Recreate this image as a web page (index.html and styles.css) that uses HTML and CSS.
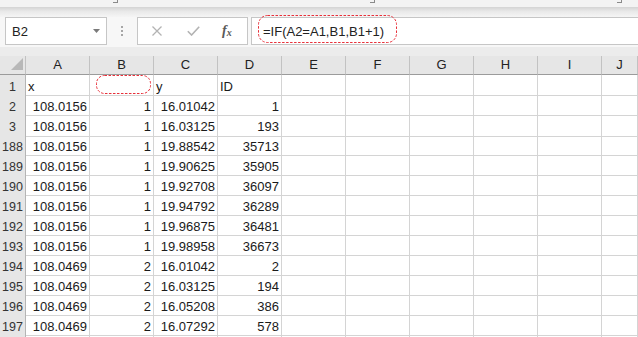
FILE: index.html
```html
<!DOCTYPE html>
<html lang="en">
<head>
  <meta charset="UTF-8">
  <title>Sheet1 - Excel</title>
  <link rel="stylesheet" href="styles.css">
</head>
<body>
  <div class="ribbon-edge">
    <span class="launcher l1"></span>
    <span class="launcher l2"></span>
    <span class="launcher l3"></span>
  </div>
  <div class="shade"></div>

  <div class="formula-bar">
    <div class="name-box">
      <span>B2</span>
      <svg class="drop" width="7" height="4" viewBox="0 0 7 4"><path d="M0 0H7L3.5 4Z" fill="#7a7a7a"/></svg>
    </div>
    <div class="grip"><i></i><i></i><i></i></div>
    <div class="fx-box">
      <svg class="icon-x" width="10" height="10" viewBox="0 0 10 10"><path d="M0.5 0.5L9.5 9.5M9.5 0.5L0.5 9.5" stroke="#b3b3b3" stroke-width="1.3" fill="none"/></svg>
      <svg class="icon-ok" width="13" height="10" viewBox="0 0 13 10"><path d="M0.8 5.2L4.6 9L12.2 0.8" stroke="#b3b3b3" stroke-width="1.6" fill="none"/></svg>
      <span class="fx">f<sub>x</sub></span>
    </div>
    <div class="formula-input">
      <span class="formula">=IF(A2=A1,B1,B1+1)</span>
      <svg class="mark formula-mark" width="139" height="28"><rect x="0.5" y="0.5" width="138" height="27" rx="9"/></svg>
    </div>
  </div>
  <div class="gap"></div>

  <div class="grid">
    <div class="row head">
      <div class="corner"><span class="corner-tri"></span></div>
      <div class="ch">A</div><div class="ch">B</div><div class="ch">C</div><div class="ch">D</div><div class="ch">E</div>
      <div class="ch">F</div><div class="ch">G</div><div class="ch">H</div><div class="ch">I</div><div class="ch">J</div>
    </div>
    <div class="row">
      <div class="rh">1</div>
      <div class="cell">x</div>
      <div class="cell marked"><svg class="mark cell-mark" width="55" height="19"><rect x="0.5" y="0.5" width="54" height="18" rx="8"/></svg></div>
      <div class="cell">y</div>
      <div class="cell">ID</div>
      <div class="cell"></div><div class="cell"></div><div class="cell"></div><div class="cell"></div><div class="cell"></div><div class="cell"></div>
    </div>
    <div class="row">
      <div class="rh">2</div>
      <div class="cell num">108.0156</div><div class="cell num">1</div><div class="cell num">16.01042</div><div class="cell num">1</div>
      <div class="cell"></div><div class="cell"></div><div class="cell"></div><div class="cell"></div><div class="cell"></div><div class="cell"></div>
    </div>
    <div class="row hidden-above">
      <div class="rh">3</div>
      <div class="cell num">108.0156</div><div class="cell num">1</div><div class="cell num">16.03125</div><div class="cell num">193</div>
      <div class="cell"></div><div class="cell"></div><div class="cell"></div><div class="cell"></div><div class="cell"></div><div class="cell"></div>
    </div>
    <div class="row">
      <div class="rh">188</div>
      <div class="cell num">108.0156</div><div class="cell num">1</div><div class="cell num">19.88542</div><div class="cell num">35713</div>
      <div class="cell"></div><div class="cell"></div><div class="cell"></div><div class="cell"></div><div class="cell"></div><div class="cell"></div>
    </div>
    <div class="row">
      <div class="rh">189</div>
      <div class="cell num">108.0156</div><div class="cell num">1</div><div class="cell num">19.90625</div><div class="cell num">35905</div>
      <div class="cell"></div><div class="cell"></div><div class="cell"></div><div class="cell"></div><div class="cell"></div><div class="cell"></div>
    </div>
    <div class="row">
      <div class="rh">190</div>
      <div class="cell num">108.0156</div><div class="cell num">1</div><div class="cell num">19.92708</div><div class="cell num">36097</div>
      <div class="cell"></div><div class="cell"></div><div class="cell"></div><div class="cell"></div><div class="cell"></div><div class="cell"></div>
    </div>
    <div class="row">
      <div class="rh">191</div>
      <div class="cell num">108.0156</div><div class="cell num">1</div><div class="cell num">19.94792</div><div class="cell num">36289</div>
      <div class="cell"></div><div class="cell"></div><div class="cell"></div><div class="cell"></div><div class="cell"></div><div class="cell"></div>
    </div>
    <div class="row">
      <div class="rh">192</div>
      <div class="cell num">108.0156</div><div class="cell num">1</div><div class="cell num">19.96875</div><div class="cell num">36481</div>
      <div class="cell"></div><div class="cell"></div><div class="cell"></div><div class="cell"></div><div class="cell"></div><div class="cell"></div>
    </div>
    <div class="row">
      <div class="rh">193</div>
      <div class="cell num">108.0156</div><div class="cell num">1</div><div class="cell num">19.98958</div><div class="cell num">36673</div>
      <div class="cell"></div><div class="cell"></div><div class="cell"></div><div class="cell"></div><div class="cell"></div><div class="cell"></div>
    </div>
    <div class="row">
      <div class="rh">194</div>
      <div class="cell num">108.0469</div><div class="cell num">2</div><div class="cell num">16.01042</div><div class="cell num">2</div>
      <div class="cell"></div><div class="cell"></div><div class="cell"></div><div class="cell"></div><div class="cell"></div><div class="cell"></div>
    </div>
    <div class="row">
      <div class="rh">195</div>
      <div class="cell num">108.0469</div><div class="cell num">2</div><div class="cell num">16.03125</div><div class="cell num">194</div>
      <div class="cell"></div><div class="cell"></div><div class="cell"></div><div class="cell"></div><div class="cell"></div><div class="cell"></div>
    </div>
    <div class="row">
      <div class="rh">196</div>
      <div class="cell num">108.0469</div><div class="cell num">2</div><div class="cell num">16.05208</div><div class="cell num">386</div>
      <div class="cell"></div><div class="cell"></div><div class="cell"></div><div class="cell"></div><div class="cell"></div><div class="cell"></div>
    </div>
    <div class="row">
      <div class="rh">197</div>
      <div class="cell num">108.0469</div><div class="cell num">2</div><div class="cell num">16.07292</div><div class="cell num">578</div>
      <div class="cell"></div><div class="cell"></div><div class="cell"></div><div class="cell"></div><div class="cell"></div><div class="cell"></div>
    </div>
    <div class="row stub">
      <div class="rh"></div>
      <div class="cell"></div><div class="cell"></div><div class="cell"></div><div class="cell"></div>
      <div class="cell"></div><div class="cell"></div><div class="cell"></div><div class="cell"></div><div class="cell"></div><div class="cell"></div>
    </div>
  </div>
</body>
</html>
```

FILE: styles.css
```css
* {
  margin: 0;
  padding: 0;
  box-sizing: border-box;
}

body {
  font-family: 'Liberation Sans', Arial, sans-serif;
  background-color: #fff;
  color: #1a1a1a;
  width: 638px;
  height: 337px;
  overflow: hidden;
}

/* bottom edge of the ribbon, cut off by the screenshot */
.ribbon-edge {
  height: 7px;
  background-color: #f3f3f3;
  display: flex;
  overflow: hidden;
}

.launcher {
  width: 5px;
  height: 3px;
  border-right: 1px solid #8a8a8a;
  border-bottom: 1px solid #8a8a8a;
}

.l1 { margin-left: 113px; }
.l2 { margin-left: 252px; }
.l3 { margin-left: 242px; }

.shade {
  height: 10px;
  background: linear-gradient(#d4d4d4, #e9e9e9 45%, #f5f5f5);
}

/* formula bar */
.formula-bar {
  height: 30px;
  background-color: #f7f7f7;
  display: flex;
  align-items: flex-start;
  padding-left: 5px;
}

.name-box {
  width: 102px;
  height: 28px;
  border: 1px solid #c6c6c6;
  background-color: #fff;
  display: flex;
  align-items: center;
  justify-content: space-between;
  padding: 0 6px 0 6px;
  font-size: 13px;
  color: #222;
}

.grip {
  width: 30px;
  display: flex;
  flex-direction: column;
  align-items: center;
  gap: 2px;
  padding-top: 9px;
}

.grip i {
  width: 2px;
  height: 2px;
  background-color: #a6a6a6;
}

.fx-box {
  width: 111px;
  height: 28px;
  border: 1px solid #c6c6c6;
  background-color: #fff;
  display: flex;
  align-items: center;
  padding-left: 14px;
}

.icon-ok { margin-left: 25px; }

.fx {
  margin-left: 22px;
  font-family: 'Liberation Serif', serif;
  font-style: italic;
  font-weight: bold;
  font-size: 14px;
  color: #595959;
}

.fx sub {
  font-size: 10px;
  vertical-align: -1px;
}

.formula-input {
  position: relative;
  flex: 1;
  height: 28px;
  margin-left: 3px;
  border: 1px solid #c6c6c6;
  border-right: none;
  background-color: #fff;
  display: flex;
  align-items: center;
  padding-left: 11px;
  font-size: 13px;
  color: #222;
}

.mark {
  position: absolute;
  overflow: visible;
}

.mark rect {
  fill: none;
  stroke: #e8303a;
  stroke-width: 1;
  stroke-dasharray: 2.5 1.5;
}

.formula-mark {
  left: 6px;
  top: -3px;
}

.gap {
  height: 9px;
  background-color: #ececec;
}

/* grid */
.row {
  display: grid;
  grid-template-columns: 26px repeat(9, 64px) 1fr;
  height: 20px;
}

.row.head {
  height: 19px;
}

.row.stub {
  height: 3px;
}

.corner {
  background-color: #e6e6e6;
  border-right: 1px solid #c2c2c2;
  border-bottom: 1px solid #9b9b9b;
  display: flex;
  justify-content: flex-end;
  align-items: flex-end;
  padding: 0 2px 4px 0;
}

.corner-tri {
  width: 0;
  height: 0;
  border-left: 12px solid transparent;
  border-bottom: 12px solid #b8b8b8;
}

.ch {
  background-color: #e6e6e6;
  border-right: 1px solid #c2c2c2;
  border-bottom: 1px solid #9b9b9b;
  text-align: center;
  font-size: 13px;
  line-height: 18px;
  color: #222;
}

.rh {
  background-color: #e6e6e6;
  border-right: 1px solid #b5b5b5;
  border-bottom: 1px solid #c9c9c9;
  text-align: center;
  font-size: 12.5px;
  line-height: 16px;
  padding-top: 4px;
  color: #333;
}

.hidden-above .rh {
  border-bottom: 2px solid #bdbdbd;
}

.cell {
  border-right: 1px solid #d4d4d4;
  border-bottom: 1px solid #d4d4d4;
  font-size: 13px;
  line-height: 16px;
  padding: 4px 2px 0 2px;
  white-space: nowrap;
  overflow: hidden;
}

.stub .cell,
.stub .rh {
  border-bottom: none;
}

.cell.num {
  text-align: right;
}

.cell.marked {
  position: relative;
  overflow: visible;
}

.cell-mark {
  left: 6px;
  top: 0;
}
```
